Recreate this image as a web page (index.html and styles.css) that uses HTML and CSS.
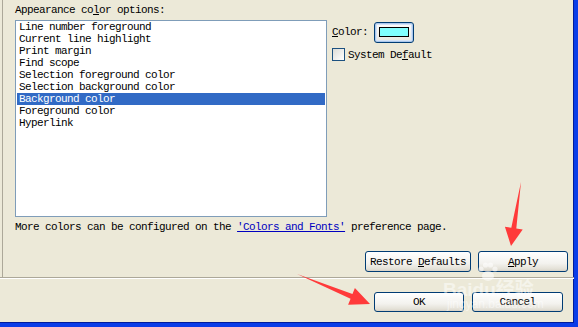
FILE: index.html
```html
<!DOCTYPE html>
<html lang="en">
<head>
    <meta charset="UTF-8">
    <title>Appearance color options</title>
    <link rel="stylesheet" href="styles.css">
</head>
<body>

    <div class="window">
        <div class="client">
            <div class="page">
                <div class="group-label">Appearance co<u>l</u>or options:</div>

                <div class="editor-row">
                    <ul class="color-list">
                        <li>Line number foreground</li>
                        <li>Current line highlight</li>
                        <li>Print margin</li>
                        <li>Find scope</li>
                        <li>Selection foreground color</li>
                        <li>Selection background color</li>
                        <li class="selected">Background color</li>
                        <li>Foreground color</li>
                        <li>Hyperlink</li>
                    </ul>

                    <div class="color-side">
                        <div class="color-row">
                            <span><u>C</u>olor:</span>
                            <button class="color-btn"><span class="swatch"></span></button>
                        </div>
                        <label class="check-row">
                            <span class="checkbox"></span>
                            <span>System De<u>f</u>ault</span>
                        </label>
                    </div>
                </div>

                <p class="more">More colors can be configured on the <a href="#">'Colors and Fonts'</a> preference page.</p>

                <div class="page-buttons">
                    <button class="btn btn-restore">Restore <u>D</u>efaults</button>
                    <button class="btn btn-apply"><u>A</u>pply</button>
                </div>
            </div>

            <div class="separator"></div>

            <div class="dialog-buttons">
                <button class="btn btn-ok">OK</button>
                <button class="btn btn-cancel">Cancel</button>
            </div>
        </div>

        <!-- annotation overlay -->
        <div class="watermark">
            <svg class="wm-paw" width="22" height="20" viewBox="0 0 22 20">
                <circle cx="4" cy="7" r="2.6" />
                <circle cx="8.5" cy="3" r="2.6" />
                <circle cx="13.5" cy="3" r="2.6" />
                <circle cx="18" cy="7" r="2.6" />
                <ellipse cx="11" cy="14" rx="6" ry="5" />
            </svg>
            <span class="wm-logo">Baidu经验</span>
            <span class="wm-url">jingyan.baidu.com</span>
        </div>
        <svg class="arrows" width="578" height="327" viewBox="0 0 578 327">
            <polygon points="521,182 516.3,228.6 522.7,229.6 511,246 504.9,226.8 511.3,227.8" />
            <polygon points="297,274 352.45,294.1 354.9,288.1 370,304 348.1,304.7 350.55,298.7" />
        </svg>
    </div>

</body>
</html>
```

FILE: styles.css
```css
* {
    box-sizing: border-box;
}

body {
    margin: 0;
    background-color: #ece9d8;
    font-family: "Liberation Mono", "Noto Sans CJK SC", monospace;
    font-size: 11px;
    letter-spacing: -0.6px;
    color: #000;
}

.window {
    position: relative;
    width: 578px;
    height: 327px;
    border-right: 4px solid #0a3de8;
    border-bottom: 4px solid #0a3de8;
    box-shadow: inset -1px -1px 0 #001c9c;
    overflow: hidden;
}

.client {
    width: 574px;
    height: 323px;
    display: flex;
    flex-direction: column;
}

.page {
    height: 277px;
    margin-left: 2px;
    border-left: 1px solid #aca899;
    padding: 4px 6px 0 12px;
}

.group-label {
    height: 12px;
    line-height: 12px;
}

.editor-row {
    display: flex;
    margin-top: 4px;
}

.color-list {
    list-style: none;
    margin: 0;
    padding: 0 1px;
    width: 312px;
    height: 197px;
    background: #fff;
    border: 1px solid #7f9db9;
}

.color-list li {
    height: 12px;
    line-height: 12px;
    padding-left: 2px;
    white-space: nowrap;
}

.color-list li.selected {
    background: #316ac5;
    color: #fff;
}

.color-side {
    margin-left: 5px;
}

.color-row {
    display: flex;
    align-items: center;
    gap: 6px;
    height: 22px;
    margin-top: 1px;
}

.color-btn {
    width: 40px;
    height: 21px;
    padding: 0;
    border: 1px solid #003c74;
    border-radius: 3px;
    background: linear-gradient(#fdfdfd, #e8e6df);
    box-shadow: inset 0 0 0 1px #aac7ec, inset 0 0 0 2px #d4e3f7;
    display: flex;
    align-items: center;
    justify-content: center;
}

.swatch {
    display: block;
    width: 30px;
    height: 10px;
    background: #80ffff;
    border: 1px solid #000;
}

.check-row {
    display: flex;
    align-items: center;
    gap: 3px;
    margin-top: 5px;
    height: 13px;
}

.checkbox {
    width: 13px;
    height: 13px;
    border: 1px solid #1c5180;
    background: linear-gradient(135deg, #dcdcd7, #fff);
}

.more {
    margin: 4px 0 0;
    line-height: 12px;
    height: 12px;
    white-space: nowrap;
}

.more a {
    color: #0000c0;
}

.page-buttons {
    display: flex;
    justify-content: flex-end;
    gap: 7px;
    margin-top: 18px;
}

.btn {
    height: 21px;
    padding: 0;
    font: inherit;
    letter-spacing: inherit;
    color: #000;
    border: 1px solid #003c74;
    border-radius: 3px;
    background: linear-gradient(#ffffff, #f3f2ee 60%, #e3e0d6 90%, #d6d0c5);
}

.btn-restore {
    width: 106px;
}

.btn-apply {
    width: 90px;
}

.separator {
    height: 2px;
    border-top: 1px solid #aca899;
    border-bottom: 1px solid #fff;
}

.dialog-buttons {
    display: flex;
    justify-content: flex-end;
    gap: 8px;
    padding: 13px 11px 0 0;
}

.dialog-buttons .btn {
    height: 20px;
}

.btn-ok {
    width: 90px;
}

.btn-cancel {
    width: 91px;
}

/* annotation: watermark + red arrows */
.watermark {
    position: absolute;
    left: 443px;
    top: 262px;
    width: 102px;
    display: flex;
    flex-direction: column;
    align-items: flex-start;
    color: rgba(255, 255, 255, 0.5);
    font-family: "Liberation Sans", "Noto Sans CJK SC", sans-serif;
    letter-spacing: 0;
    pointer-events: none;
}

.wm-paw {
    display: block;
    margin-left: 34px;
    fill: rgba(255, 255, 255, 0.55);
}

.wm-logo {
    font-size: 19px;
    font-weight: bold;
    line-height: 15px;
    height: 15px;
}

.wm-url {
    font-size: 12px;
    line-height: 13px;
    margin-top: 1px;
    padding-left: 4px;
}

.arrows {
    position: absolute;
    left: 0;
    top: 0;
    pointer-events: none;
}

.arrows polygon {
    fill: #ff3a3a;
}
```
